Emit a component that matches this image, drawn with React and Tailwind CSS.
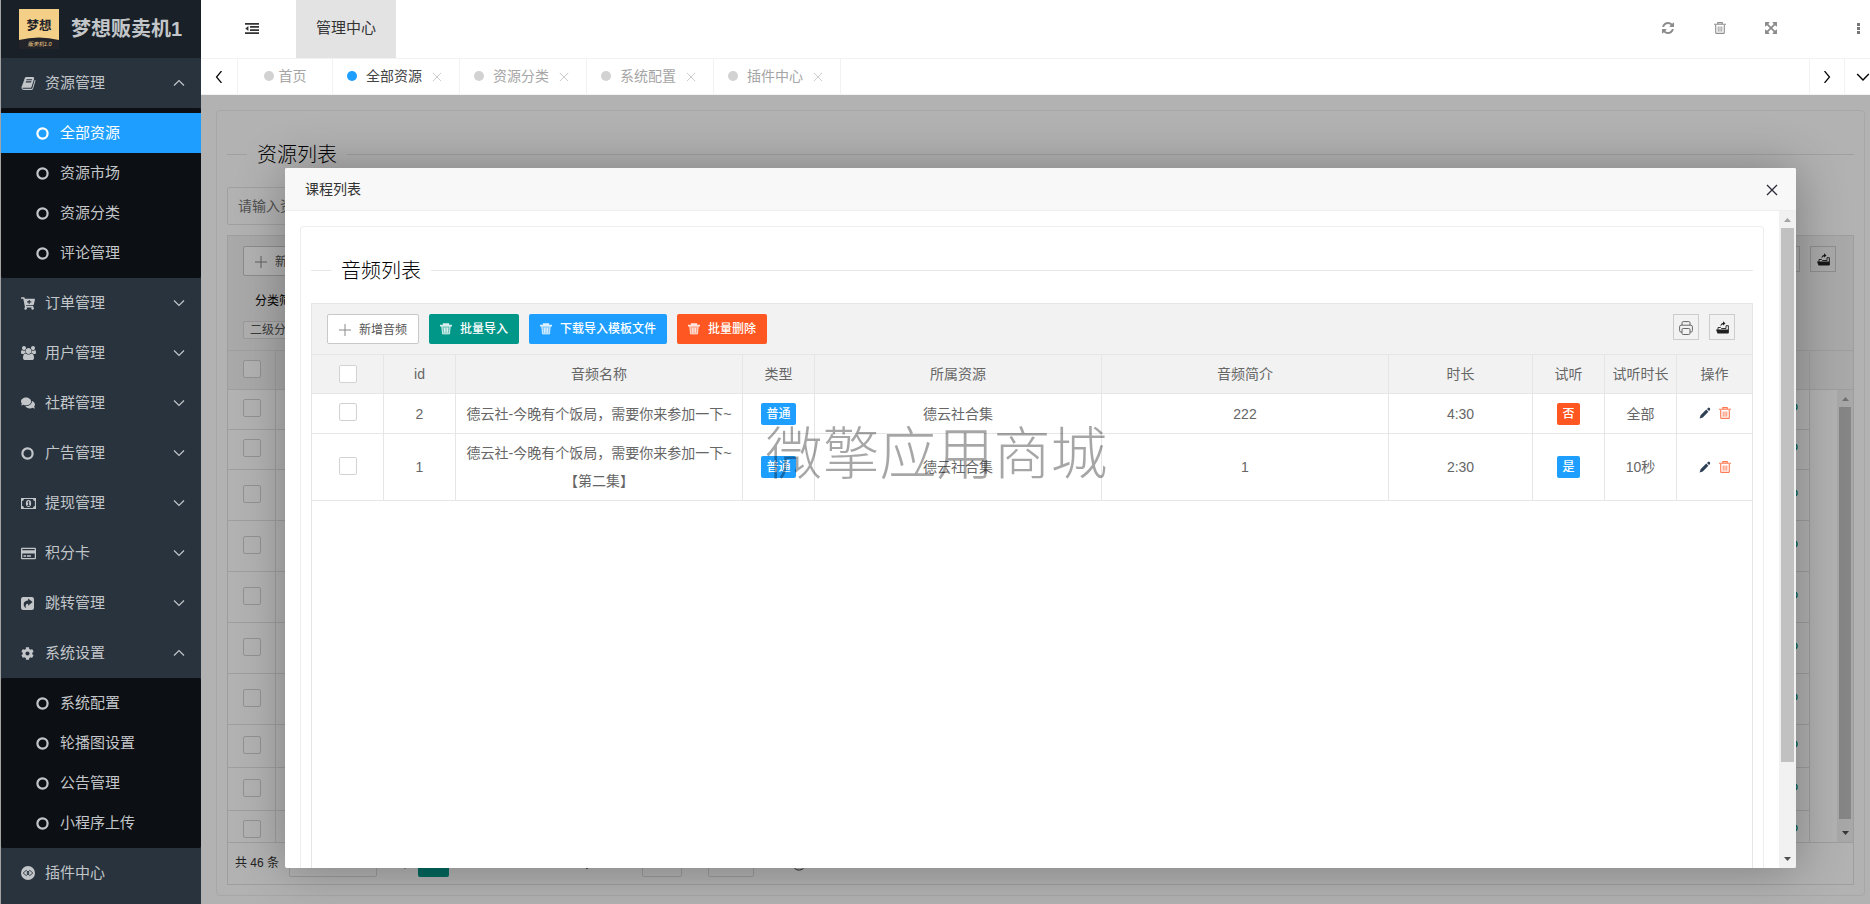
import React from 'react';
import { FaCartPlus, FaComments, FaCog, FaRegCreditCard } from 'react-icons/fa';

const BOOK =
  'M1703 478q40 57 18 129l-275 906q-19 64-76.5 107.5t-122.5 43.5h-923q-77 0-148.5-53.5t-99.5-131.5q-24-67-2-127 0-4 3-27t4-37q1-8-3-21.5t-3-19.5q2-11 8-21t16.5-23.5 16.5-23.5q23-38 45-91.5t30-91.5q3-10 .5-30t-.5-28q3-11 17-28t17-23q21-36 42-92t25-90q1-9-2.5-32t.5-28q4-13 22-30.5t22-22.5q19-26 42.5-84.5t27.5-96.5q1-8-3-25.5t-2-26.5q2-8 9-18t18-23 17-21q8-12 16.5-30.5t15-35 16-36 19.5-32 26.5-23.5 36-11.5 47.5 5.5l-1 3q38-9 51-9h761q74 0 114 56t18 130l-274 906q-36 119-71.5 153.5t-128.5 34.5h-869q-27 0-38 15-11 16-1 43 24 70 144 70h923q29 0 56-15.5t35-41.5l300-987q7-22 5-57 38 15 59 43zm-1064 2q-4 13 2 22.5t20 9.5h608q13 0 25.5-9.5t16.5-22.5l21-64q4-13-2-22.5t-20-9.5h-608q-13 0-25.5 9.5t-16.5 22.5zm-83 256q-4 13 2 22.5t20 9.5h608q13 0 25.5-9.5t16.5-22.5l21-64q4-13-2-22.5t-20-9.5h-608q-13 0-25.5 9.5t-16.5 22.5z';
const REFRESH =
  'M1639 1056q0 5-1 7-64 268-268 434.5t-478 166.5q-146 0-282.5-55t-243.5-157l-129 129q-19 19-45 19t-45-19-19-45v-448q0-26 19-45t45-19h448q26 0 45 19t19 45-19 45l-137 137q71 66 161 102t187 36q134 0 250-65t186-179q11-17 53-117 8-23 30-23h192q13 0 22.5 9.5t9.5 22.5zm25-800v448q0 26-19 45t-45 19h-448q-26 0-45-19t-19-45 19-45l138-138q-148-137-349-137-134 0-250 65t-186 179q-11 17-53 117-8 23-30 23h-199q-13 0-22.5-9.5t-9.5-22.5v-7q65-268 270-434.5t480-166.5q146 0 284 55.5t245 156.5l130-129q19-19 45-19t45 19 19 45z';
const EXPAND =
  'M1411 541l-355 355 355 355 144-144q29-31 70-14 39 17 39 59v448q0 26-19 45t-45 19h-448q-42 0-59-40-17-39 14-69l144-144-355-355-355 355 144 144q31 30 14 69-17 40-59 40h-448q-26 0-45-19t-19-45v-448q0-42 40-59 39-17 69 14l144 144 355-355-355-355-144 144q-19 19-45 19-12 0-24-5-40-17-40-59v-448q0-26 19-45t45-19h448q42 0 59 40 17 39-14 69l-144 144 355 355 355-355-144-144q-31-30-14-69 17-40 59-40h448q26 0 45 19t19 45v448q0 42-39 59-13 5-25 5-26 0-45-19z';
const GROUP =
  'M593 896q-162 5-265 128h-134q-82 0-138-40.5t-56-118.5q0-353 124-353 6 0 43.5 21t97.5 42.5 119 21.5q67 0 133-23-5 37-5 66 0 139 81 256zm1071 637q0 120-73 189.5t-194 69.5h-874q-121 0-194-69.5t-73-189.5q0-53 3.5-103.5t14-109 26.5-108.5 43-97.5 62-81 85.5-53.5 111.5-20q10 0 43 21.5t73 48 107 48 135 21.5 135-21.5 107-48 73-48 43-21.5q61 0 111.5 20t85.5 53.5 62 81 43 97.5 26.5 108.5 14 109 3.5 103.5zm-1024-1277q0 106-75 181t-181 75-181-75-75-181 75-181 181-75 181 75 75 181zm704 384q0 159-112.5 271.5t-271.5 112.5-271.5-112.5-112.5-271.5 112.5-271.5 271.5-112.5 271.5 112.5 112.5 271.5zm576 225q0 78-56 118.5t-138 40.5h-134q-103-123-265-128 81-117 81-256 0-29-5-66 66 23 133 23 59 0 119-21.5t97.5-42.5 43.5-21q124 0 124 353zm-128-609q0 106-75 181t-181 75-181-75-75-181 75-181 181-75 181 75 75 181z';

const Glyph = ({ d, className, box = '0 0 1792 1792' }) => (
  <svg viewBox={box} fill="currentColor" className={className}>
    <path d={d} />
  </svg>
);

const Ring = ({ className }) => (
  <svg viewBox="0 0 13 13" fill="none" stroke="currentColor" strokeWidth="2.2" className={className}>
    <circle cx="6.5" cy="6.5" r="5.1" />
  </svg>
);

const Money = () => (
  <svg viewBox="0 0 15 11" className="h-[11px] w-[15px]">
    <path
      fill="currentColor"
      fillRule="evenodd"
      d="M0 0h15v11H0zM3 1.1a2.1 2.1 0 0 1-1.9 2v4.8a2.1 2.1 0 0 1 1.9 2h9a2.1 2.1 0 0 1 1.9-2V3.1a2.1 2.1 0 0 1-1.9-2z"
    />
    <ellipse cx="7.5" cy="5.5" rx="2.6" ry="3.4" fill="currentColor" />
    <path d="M6.6 4.2l1-.8v4M6.4 7.5h2.3" stroke="#28333e" fill="none" strokeWidth="1" />
  </svg>
);

const ShareBox = () => (
  <svg viewBox="0 0 13 13" className="h-[13px] w-[13px]">
    <rect width="13" height="13" rx="2.2" fill="currentColor" />
    <path d="M7.1 1.4l4.500 3.600-4.500 3.700V6.700C4.800 6.700 4.200 8.200 4.900 11.200 1.400 8.600 2 3.500 7.100 3.400z" fill="#28333e" />
  </svg>
);

const Plugin = () => (
  <svg viewBox="0 0 14 14" className="h-[14px] w-[14px]">
    <circle cx="7" cy="7" r="7" fill="currentColor" />
    <g fill="none" stroke="#28333e" strokeWidth="0.9">
      <path d="M2.200 7l3-2.600L8.200 7l-3 2.600zM5.800 7l3-2.600 3 2.600-3 2.600z" />
    </g>
  </svg>
);

const Chevron = ({ dir, className }) => {
  const d = {
    up: 'M1 8.500l5-5 5 5',
    down: 'M1 3.500l5 5 5-5',
    left: 'M8.500 0l-5 6 5 6',
    right: 'M3.500 0l5 6-5 6',
  }[dir];
  return (
    <svg viewBox="0 0 12 12" fill="none" stroke="currentColor" strokeWidth="1.2" className={className}>
      <path d={d} />
    </svg>
  );
};

const Cross = ({ className }) => (
  <svg viewBox="0 0 12 12" fill="none" stroke="currentColor" className={className}>
    <path d="M1 1l10 10M11 1L1 11" />
  </svg>
);

const Bin = ({ className }) => (
  <svg viewBox="0 0 12 12" fill="none" stroke="currentColor" className={className}>
    <path d="M0 2.300h12M3.800 2V.600h4.400V2M1.700 3v7.400q0 1 1 1h6.600q1 0 1-1V3" strokeWidth="1.100" />
    <path d="M4.200 4.500v5.200M6 4.500v5.200M7.800 4.500v5.200" strokeWidth="0.900" />
  </svg>
);

const SolidBin = () => (
  <svg viewBox="0 0 13 12" fill="none" stroke="currentColor" className="h-3 w-3">
    <path d="M1.800 3h9.400l-.8 8.400H2.600z" fill="currentColor" fillOpacity="0.45" stroke="none" />
    <path d="M0 2.300h13M4 1.500V.600h5v.9" strokeWidth="1.800" strokeOpacity="0.850" />
    <path d="M2 3l.7 8.300h7.600L11 3M4.800 4.500v5.500M6.500 4.500v5.500M8.200 4.500v5.500" strokeOpacity="0.800" />
  </svg>
);

const Plus = () => (
  <svg viewBox="0 0 12 12" fill="none" stroke="#888" className="h-3 w-3">
    <path d="M6 0v12M0 6h12" />
  </svg>
);

const Printer = () => (
  <svg viewBox="0 0 14 14" fill="none" stroke="#666" className="h-[14px] w-[14px]">
    <path d="M3 4V1.800Q3 .600 4.200.600h5.600Q11 .600 11 1.800V4M3 11H1.800Q.600 11 .600 9.500V5.800Q.600 4.200 2 4.200h10q1.400 0 1.400 1.600v3.700q0 1.500-1.200 1.500H11" />
    <rect x="3" y="7.500" width="8" height="6" rx="1.200" />
  </svg>
);

const Export = () => (
  <svg viewBox="0 0 13 13" className="h-[13px] w-[13px]">
    <path d="M0 8.500h12.400v4H1.500z" fill="#222" />
    <path d="M2 9V6.500h2.500l1 1H10V4.700h2.400V12" fill="none" stroke="#222" strokeWidth="0.900" />
    <path d="M4.500 5.500C4.500 3.500 5.500 2 7 2V.300L9.500 2.500 7 4.500V3.300Q5.500 3.500 4.500 5.500" fill="#222" />
  </svg>
);

const Pencil = () => (
  <svg viewBox="0 0 12 12" className="h-3 w-3">
    <path d="M.600 11.400l1-3.200L7.200 2.600l2.200 2.200-5.600 5.600zM8 1.900l1-1q.800-.7 1.700.2.900.900.300 1.800l-1 1.100z" fill="#2f4056" />
  </svg>
);

const OutdentIcon = () => (
  <svg viewBox="0 0 14 11" className="h-[11px] w-[14px]" fill="#333">
    <path d="M0 0h14v1.700H0zM5 3.100h9v1.700H5zM5 6.200h9v1.700H5zM0 9.300h14V11H0zM3.400 2.900v5.200L.300 5.500z" />
  </svg>
);

const Logo = () => (
  <svg viewBox="0 0 40 40" className="h-10 w-10 shrink-0">
    <rect width="40" height="40" fill="#f4cf88" />
    <path d="M0 31Q20 26 40 31v9H0z" fill="#23242a" />
    <text x="20" y="21" textAnchor="middle" fontSize="12.500" fontWeight="700" fill="#23242a">梦想</text>
    <text x="20.500" y="36.500" textAnchor="middle" fontSize="5.500" fontStyle="italic" fill="#f4cf88">贩卖机1.0</text>
  </svg>
);

const NAV = [
  { label: '资源管理', icon: <Glyph d={BOOK} className="h-[15px] w-[15px]" />, children: ['全部资源', '资源市场', '资源分类', '评论管理'] },
  { label: '订单管理', icon: <FaCartPlus className="h-[13px] w-[14px]" /> },
  { label: '用户管理', icon: <Glyph d={GROUP} box="0 0 1920 1792" className="h-[14px] w-[15px]" /> },
  { label: '社群管理', icon: <FaComments className="h-[14px] w-[14px]" /> },
  { label: '广告管理', icon: <Ring className="h-[13px] w-[13px]" /> },
  { label: '提现管理', icon: <Money /> },
  { label: '积分卡', icon: <FaRegCreditCard className="h-[15px] w-[15px]" /> },
  { label: '跳转管理', icon: <ShareBox /> },
  { label: '系统设置', icon: <FaCog className="h-[13px] w-[13px]" />, children: ['系统配置', '轮播图设置', '公告管理', '小程序上传'] },
  { label: '插件中心', icon: <Plugin />, leaf: true },
];

function Sidebar() {
  return (
    <aside className="w-[201px] shrink-0 border-l border-l-[#a3a3a3] bg-[#28333e] text-[15px] text-[#c3c6c9]">
      <div className="flex h-[58px] items-center gap-3 bg-[#192027] pl-[18px]">
        <Logo />
        <span className="text-xl font-bold whitespace-nowrap">梦想贩卖机1</span>
      </div>
      <nav>
        {NAV.map((n) => (
          <div key={n.label}>
            <a href="#" className="flex h-[50px] items-center pr-4 pl-5">
              <span className="flex w-6 items-center">{n.icon}</span>
              <span className="flex-1">{n.label}</span>
              {!n.leaf && <Chevron dir={n.children ? 'up' : 'down'} className="h-3 w-3" />}
            </a>
            {n.children && (
              <div className="rounded-xs bg-[#0c0f13] py-[5px]">
                {n.children.map((c) => (
                  <a
                    key={c}
                    href="#"
                    className={
                      c === '全部资源'
                        ? 'flex h-10 items-center bg-[#1e9fff] pl-[35px] text-white'
                        : 'flex h-10 items-center pl-[35px]'
                    }
                  >
                    <span className="flex w-6 items-center">
                      <Ring className="h-[13px] w-[13px]" />
                    </span>
                    {c}
                  </a>
                ))}
              </div>
            )}
          </div>
        ))}
      </nav>
    </aside>
  );
}

function TopBar() {
  return (
    <header className="flex h-[58px] items-center justify-between bg-white">
      <div className="flex h-full items-center">
        <button aria-label="收起菜单" className="flex h-full w-[95px] items-center justify-center pb-px pl-[6px]">
          <OutdentIcon />
        </button>
        <a href="#" className="flex h-full w-[100px] items-center justify-center bg-[#e3e3e3] pb-px text-[15px] text-[#333]">
          管理中心
        </a>
      </div>
      <div className="flex items-center pb-[2px] text-[#8c8c8c]">
        <button aria-label="刷新" className="flex w-[52px] justify-center">
          <Glyph d={REFRESH} className="h-[14px] w-[14px]" />
        </button>
        <button aria-label="清除缓存" className="flex w-[51px] justify-center">
          <Bin className="h-3 w-3" />
        </button>
        <button aria-label="全屏" className="flex w-[52px] justify-center">
          <Glyph d={EXPAND} className="h-[14px] w-[14px]" />
        </button>
        <button aria-label="更多" className="ml-[50px] flex w-[23px] justify-center">
          <svg viewBox="0 0 3 11" className="h-[11px] w-[3px]" fill="#777">
            <path d="M0 0h3v3H0zM0 4h3v3H0zM0 8h3v3H0z" />
          </svg>
        </button>
      </div>
    </header>
  );
}

const TABS = ['全部资源', '资源分类', '系统配置', '插件中心'];

function TabBar() {
  return (
    <div className="flex h-[37px] border-y border-[#f2f2f2] bg-white text-sm text-[#a5a5a5]">
      <button aria-label="向左" className="flex w-[37px] items-center justify-center border-r border-[#f2f2f2] text-black">
        <Chevron dir="left" className="h-3 w-3" />
      </button>
      <a href="#" className="flex w-[95px] items-center justify-center gap-[5px] border-r border-[#f2f2f2] pb-[2px]">
        <i className="h-[10px] w-[10px] rounded-full bg-[#d2d2d2]" />
        首页
      </a>
      {TABS.map((t, i) => (
        <div key={t} className="flex w-[127px] items-center justify-center border-r border-[#f2f2f2] pr-[3px] pb-[2px]">
          <a href="#" className={i === 0 ? 'flex items-center gap-[9px] text-[#444]' : 'flex items-center gap-[9px]'}>
            <i className={i === 0 ? 'h-[10px] w-[10px] rounded-full bg-[#1e9fff]' : 'h-[10px] w-[10px] rounded-full bg-[#d2d2d2]'} />
            {t}
          </a>
          <button aria-label={'关闭' + t} className="ml-[10px] pt-[2px] text-[#c2c2c2]">
            <Cross className="h-[10px] w-[10px]" />
          </button>
        </div>
      ))}
      <div className="flex-1" />
      <button aria-label="向右" className="flex w-9 items-center justify-center border-x border-[#f2f2f2] text-black">
        <Chevron dir="right" className="h-3 w-3" />
      </button>
      <button aria-label="标签操作" className="flex w-[25px] items-center justify-end text-black">
        <Chevron dir="down" className="h-[14px] w-[14px]" />
      </button>
    </div>
  );
}

const SectionTitle = ({ children }) => (
  <div className="flex h-[66px] items-center gap-[10px]">
    <span className="h-px w-5 bg-[#e6e6e6]" />
    <h2 className="pt-[2px] text-xl font-light text-black">{children}</h2>
    <span className="h-px flex-1 bg-[#e6e6e6]" />
  </div>
);

const Check = ({ label }) => (
  <input
    type="checkbox"
    aria-label={label}
    className="block h-[18px] w-[18px] appearance-none rounded-xs border border-[#d2d2d2] bg-white"
  />
);

const ToolIcons = () => (
  <div className="flex gap-[10px]">
    <button aria-label="打印" className="flex h-[26px] w-[26px] items-center justify-center border border-[#ccc] pt-px">
      <Printer />
    </button>
    <button aria-label="导出" className="flex h-[26px] w-[26px] items-center justify-center border border-[#ccc] pt-px">
      <Export />
    </button>
  </div>
);

const ScrollBar = ({ thumb, edge }) => (
  <div className={edge + ' flex shrink-0 flex-col items-center bg-[#f1f1f1]'} aria-hidden="true">
    <svg viewBox="0 0 17 17" className="h-[17px] w-[17px] shrink-0">
      <path d="M5 11h7L8.500 7z" fill="#a3a3a3" />
    </svg>
    <div className="min-h-0 w-full flex-1 px-[2px]">
      <div className={thumb + ' bg-[#c1c1c1]'} />
    </div>
    <svg viewBox="0 0 17 17" className="h-[17px] w-[17px] shrink-0">
      <path d="M5 6h7l-3.500 4z" fill="#505050" />
    </svg>
  </div>
);

const BG_ROWS = ['h-10', 'h-10', 'h-[51px]', 'h-[51px]', 'h-[51px]', 'h-[51px]', 'h-[51px]', 'h-[43px]', 'h-[43px]', 'h-10'];

function ResourcePage() {
  return (
    <div className="pt-[15px] pr-[5px] pb-2 pl-[15px]">
      <div className="rounded border border-[#f0f0f0] bg-white p-[10px]">
        <SectionTitle>资源列表</SectionTitle>
        <input
          aria-label="资源名称"
          placeholder="请输入资源名称"
          className="mb-[10px] block h-[38px] w-[190px] rounded-xs border border-[#e6e6e6] px-[10px] text-sm placeholder:text-[#757575]"
        />
        <div className="border border-[#e2e2e2]">
          <div className="h-[114px] bg-[#f2f2f2] px-[15px] pt-[10px] text-xs text-[#555]">
            <div className="flex items-start justify-between">
              <button className="flex h-[30px] items-center gap-2 rounded-xs border border-[#c9c9c9] bg-white px-[11px] pt-px">
                <Plus />
                新增资源
              </button>
              <div className="pr-[2px]">
                <ToolIcons />
              </div>
            </div>
            <div className="flex h-[45px] items-center px-3 pt-1 text-black">分类筛选</div>
            <button className="block h-[18px] rounded-xs border border-[#ddd] bg-[#fbfbfb] px-[6px] leading-4">二级分类</button>
          </div>
          <div className="flex h-[40px] border-y border-[#e2e2e2] bg-[#f2f2f2]">
            <div className="flex w-12 items-center border-r border-[#e2e2e2] pb-[2px] pl-[15px]">
              <Check label="全选资源" />
            </div>
            <div className="flex-1" />
            <div className="w-11 border-l border-[#e2e2e2]" />
          </div>
          <div className="flex h-[452px] overflow-hidden">
            <div className="flex-1">
              <table className="w-full table-fixed border-separate border-spacing-0">
                <tbody>
                  {BG_ROWS.map((h, i) => (
                    <tr key={i} className={h}>
                      <td className="w-12 border-r border-b border-[#e2e2e2] pb-[3px] pl-[15px] align-middle">
                        <Check label={'选择第' + (i + 1) + '行'} />
                      </td>
                      <td className="border-r border-b border-[#e2e2e2] pr-[11px] pb-[5px] align-middle">
                        <button aria-label="查看" className="ml-auto block text-[#009688]">
                          <Ring className="h-2 w-2" />
                        </button>
                      </td>
                    </tr>
                  ))}
                </tbody>
              </table>
            </div>
            <div className="w-[27px]" />
            <ScrollBar edge="w-4" thumb="h-[412px]" />
          </div>
          <div className="flex h-[42px] items-start gap-[10px] border-t border-[#e2e2e2] px-[7px] pt-[6px] text-xs text-[#333]">
            <span className="leading-7">共 46 条</span>
            <select aria-label="每页条数" className="h-7 w-[88px] rounded-xs border border-[#ddd] bg-white pl-5">
              <option>10 条/页</option>
            </select>
            <div className="flex">
              <button aria-label="上一页" className="flex h-7 w-[31px] items-center justify-center">
                <Chevron dir="left" className="h-3 w-3 text-[#aaa]" />
              </button>
              <button className="h-7 w-[31px] rounded-xs bg-[#009688] text-white">1</button>
              <button className="h-7 w-[31px]">2</button>
              <button className="h-7 w-[31px]">3</button>
              <span className="h-7 w-[31px] text-center">…</span>
              <button className="h-7 w-[31px]">5</button>
              <button aria-label="下一页" className="flex h-7 w-[31px] items-center justify-center">
                <Chevron dir="right" className="h-3 w-3" />
              </button>
            </div>
            <label className="flex items-center gap-1">
              到第
              <input defaultValue="1" className="h-7 w-10 rounded-xs border border-[#ddd] pb-1 text-center" />
              页
            </label>
            <button className="h-7 w-[46px] rounded-xs border border-[#ddd]">确定</button>
            <button aria-label="刷新列表" className="ml-7 flex h-7 items-center pt-[2px]">
              <svg viewBox="0 0 14 14" fill="none" stroke="currentColor" className="h-[14px] w-[14px]">
                <path d="M12.500 4A6.200 6.200 0 1 0 13.200 7M12.800 1v3.300H9.500" />
              </svg>
            </button>
          </div>
        </div>
      </div>
    </div>
  );
}

const HEADS = ['id', '音频名称', '类型', '所属资源', '音频简介', '时长', '试听', '试听时长', '操作'];
const ROWS = [
  { id: '2', name: '德云社-今晚有个饭局，需要你来参加一下~', intro: '222', time: '4:30', trial: false, len: '全部', h: 'h-10' },
  { id: '1', name: '德云社-今晚有个饭局，需要你来参加一下~ 【第二集】', intro: '1', time: '2:30', trial: true, len: '10秒', h: 'h-[67px]' },
];

const Tag = ({ color, children }) => (
  <span className={color + ' inline-block rounded-xs px-[5px] text-xs leading-[22px] font-medium text-white'}>{children}</span>
);

function AudioTable() {
  const cell = 'border-r border-b border-[#e6e6e6] py-0';
  return (
    <table className="w-full table-fixed border-separate border-spacing-0 text-center text-sm text-[#666]">
      <colgroup>
        <col className="w-[72px]" />
        <col className="w-[72px]" />
        <col />
        <col className="w-[72px]" />
        <col />
        <col />
        <col className="w-36" />
        <col className="w-[72px]" />
        <col className="w-[72px]" />
        <col className="w-[76px]" />
      </colgroup>
      <thead>
        <tr className="h-[39px] bg-[#f2f2f2]">
          <th className={cell}>
            <div className="flex justify-center pb-px">
              <Check label="全选" />
            </div>
          </th>
          {HEADS.map((h) => (
            <th key={h} className={cell + ' font-normal'}>
              {h}
            </th>
          ))}
        </tr>
      </thead>
      <tbody>
        {ROWS.map((r) => (
          <tr key={r.id} className={r.h}>
            <td className={cell}>
              <div className="flex justify-center pb-[3px]">
                <Check label={'选择' + r.id} />
              </div>
            </td>
            <td className={cell}>{r.id}</td>
            <td className={cell + ' px-2 leading-7'}>{r.name}</td>
            <td className={cell}>
              <Tag color="bg-[#1e9fff]">普通</Tag>
            </td>
            <td className={cell}>德云社合集</td>
            <td className={cell}>{r.intro}</td>
            <td className={cell}>{r.time}</td>
            <td className={cell}>{r.trial ? <Tag color="bg-[#1e9fff]">是</Tag> : <Tag color="bg-[#ff5722]">否</Tag>}</td>
            <td className={cell}>{r.len}</td>
            <td className={cell}>
              <div className="flex items-center justify-center gap-2 pb-px">
                <button aria-label="编辑">
                  <Pencil />
                </button>
                <button aria-label="删除" className="text-[#ff7850]">
                  <Bin className="h-3 w-3" />
                </button>
              </div>
            </td>
          </tr>
        ))}
      </tbody>
    </table>
  );
}

function AudioDialog() {
  const btn = 'flex h-[30px] items-center gap-2 rounded-xs px-[11px] font-medium text-white';
  return (
    <section
      role="dialog"
      aria-label="课程列表"
      className="flex min-w-0 flex-1 flex-col overflow-hidden rounded-xs bg-white shadow-[1px_1px_50px_rgba(0,0,0,0.3)]"
    >
      <div className="flex h-[43px] shrink-0 items-center justify-between border-b border-[#eee] bg-[#f8f8f8] pr-[18px] pl-5 text-sm text-[#333]">
        <h1>课程列表</h1>
        <button aria-label="关闭" className="pt-[2px] text-[#2d2c3b]">
          <Cross className="h-3 w-3 stroke-[1.3]" />
        </button>
      </div>
      <div className="flex min-h-0 flex-1">
        <div className="flex min-w-0 flex-1 flex-col px-[15px] pt-[15px]">
          <div className="flex min-h-0 flex-1 flex-col rounded-t border border-b-0 border-[#eee] px-[10px] pt-[10px]">
            <SectionTitle>音频列表</SectionTitle>
            <div className="flex min-h-0 flex-1 flex-col border-t border-l border-[#e6e6e6]">
              <div className="flex h-[51px] shrink-0 items-start gap-[10px] border-r border-b border-[#e6e6e6] bg-[#f2f2f2] pt-[10px] pr-[17px] pl-[15px] text-xs">
                <button className="flex h-[30px] items-center gap-2 rounded-xs border border-[#c9c9c9] bg-white px-[11px] pt-px text-[#555]">
                  <Plus />
                  新增音频
                </button>
                <button className={btn + ' bg-[#009688]'}>
                  <SolidBin />
                  批量导入
                </button>
                <button className={btn + ' bg-[#1e9fff]'}>
                  <SolidBin />
                  下载导入模板文件
                </button>
                <button className={btn + ' bg-[#ff5722]'}>
                  <SolidBin />
                  批量删除
                </button>
                <div className="flex-1" />
                <ToolIcons />
              </div>
              <AudioTable />
              <div className="flex-1 border-r border-[#e6e6e6]" />
            </div>
          </div>
        </div>
        <ScrollBar edge="w-[17px]" thumb="h-[534px]" />
      </div>
    </section>
  );
}

export default function App() {
  return (
    <div className="flex min-h-screen bg-white font-['Liberation_Sans','Noto_Sans_CJK_SC',sans-serif]">
      <Sidebar />
      <div className="flex min-w-0 flex-1 flex-col">
        <TopBar />
        <TabBar />
        <main className="relative flex-1 overflow-hidden bg-white">
          <ResourcePage />
          <div className="absolute inset-0 flex bg-black/30 pt-[73px] pr-[74px] pb-9 pl-[84px]">
            <AudioDialog />
          </div>
          <div className="pointer-events-none absolute inset-x-0 top-[317px] pr-[198px] text-center text-[57px] leading-[84px] font-light whitespace-nowrap text-black/35">
            <span>微擎应用商城</span>
          </div>
        </main>
      </div>
    </div>
  );
}
